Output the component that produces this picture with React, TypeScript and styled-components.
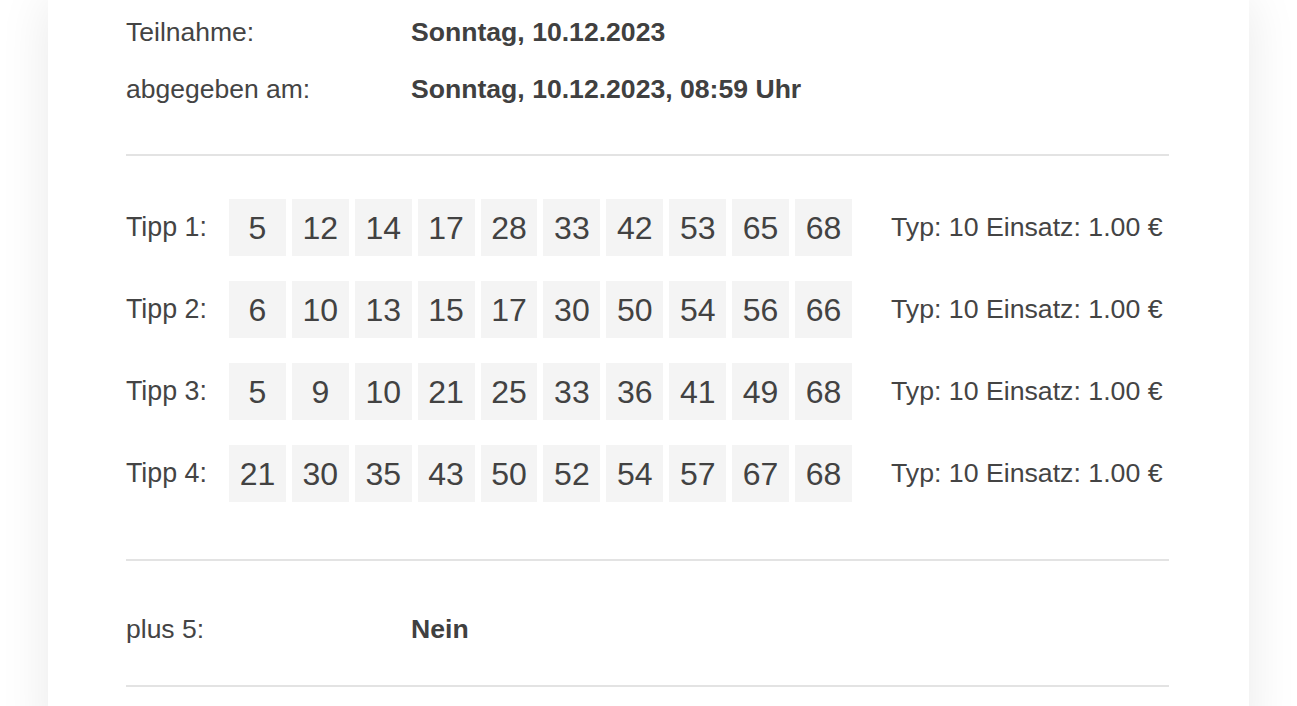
import styled, { createGlobalStyle } from 'styled-components';

const GlobalStyle = createGlobalStyle`
  html, body {
    margin: 0;
    padding: 0;
    background: #ffffff;
    overflow: hidden;
  }
  body {
    font-family: "Liberation Sans", Arial, Helvetica, sans-serif;
    color: #444444;
  }
`;

const Page = styled.div`
  padding: 0 48px;
`;

const Card = styled.div`
  background: #ffffff;
  box-shadow: 0 0 48px rgba(0, 0, 0, 0.09);
  padding: 4px 80px 60px 78px;
`;

const InfoRow = styled.div`
  display: grid;
  grid-template-columns: 285px 1fr;
  align-items: center;
  height: 57px;
  font-size: 26.5px;
`;

const Label = styled.span`
  color: #444;
`;

const Value = styled.span`
  font-weight: bold;
  font-size: 26.6px;
  color: #404040;
`;

const Divider = styled.hr`
  border: none;
  border-top: 2px solid #e3e3e3;
  margin: ${(p: { $top: number; $bottom: number }) => `${p.$top}px 0 ${p.$bottom}px`};
`;

const TippList = styled.div`
  display: flex;
  flex-direction: column;
  gap: 25px;
`;

const TippRow = styled.div`
  display: flex;
  align-items: center;
  height: 57px;
`;

const TippLabel = styled.span`
  width: 103px;
  font-size: 26.8px;
`;

const Numbers = styled.div`
  display: grid;
  grid-template-columns: repeat(10, 56.9px);
  column-gap: 6px;
  width: 622px;
`;

const NumberBox = styled.div`
  box-sizing: border-box;
  height: 57px;
  padding-top: 2px;
  background: #f4f4f4;
  display: flex;
  align-items: center;
  justify-content: center;
  font-size: 32px;
  color: #424242;
`;

const TippInfo = styled.span`
  margin-left: 40px;
  font-size: 26.7px;
  white-space: nowrap;
`;

const tipps: number[][] = [
  [5, 12, 14, 17, 28, 33, 42, 53, 65, 68],
  [6, 10, 13, 15, 17, 30, 50, 54, 56, 66],
  [5, 9, 10, 21, 25, 33, 36, 41, 49, 68],
  [21, 30, 35, 43, 50, 52, 54, 57, 67, 68],
];

export default function App() {
  return (
    <Page>
      <GlobalStyle />
      <Card>
        <InfoRow>
          <Label>Teilnahme:</Label>
          <Value>Sonntag, 10.12.2023</Value>
        </InfoRow>
        <InfoRow>
          <Label>abgegeben am:</Label>
          <Value>Sonntag, 10.12.2023, 08:59 Uhr</Value>
        </InfoRow>

        <Divider $top={36} $bottom={43} />

        <TippList>
          {tipps.map((nums, i) => (
            <TippRow key={i}>
              <TippLabel>Tipp {i + 1}:</TippLabel>
              <Numbers>
                {nums.map((n, j) => (
                  <NumberBox key={j}>{n}</NumberBox>
                ))}
              </Numbers>
              <TippInfo>Typ: 10 Einsatz: 1.00 €</TippInfo>
            </TippRow>
          ))}
        </TippList>

        <Divider $top={57} $bottom={40} />

        <InfoRow>
          <Label>plus 5:</Label>
          <Value>Nein</Value>
        </InfoRow>

        <Divider $top={27} $bottom={0} />
      </Card>
    </Page>
  );
}
